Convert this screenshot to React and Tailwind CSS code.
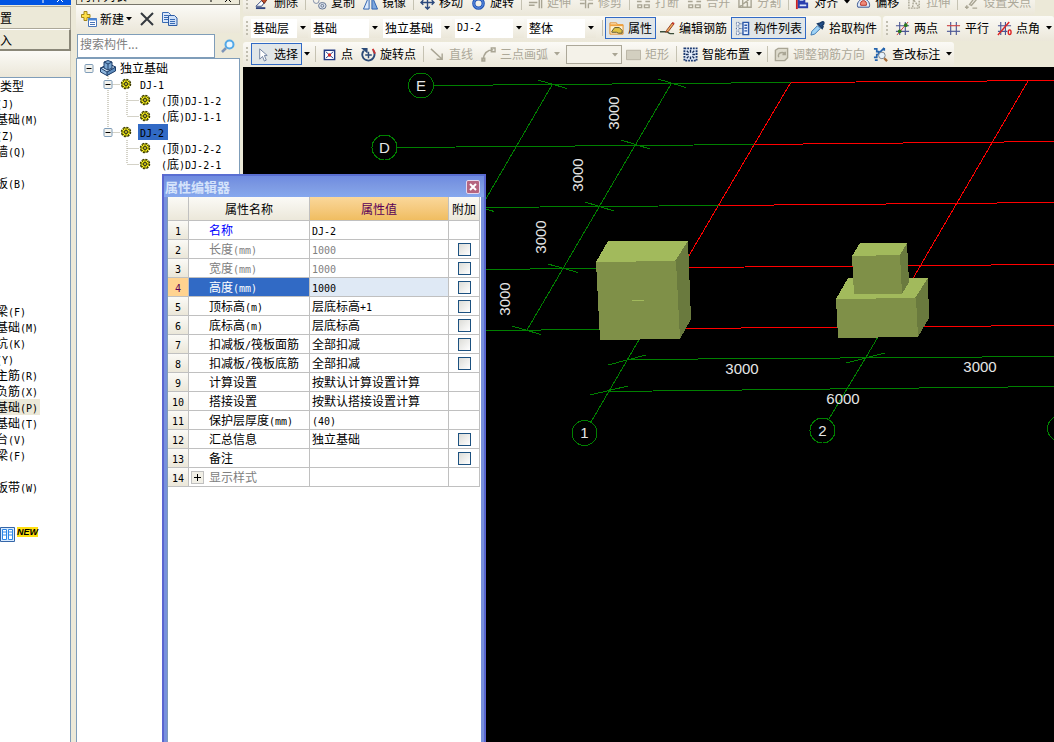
import React from "react";

const LATIN = "font-['DejaVu_Sans_Mono',monospace] text-[10px] leading-none";

/* Sets Latin runs half as wide as the CJK characters beside them. */
function T({ children }) {
  return String(children)
    .split(/([\x21-\x7e]+)/)
    .filter(Boolean)
    .map((part, i) =>
      /^[\x21-\x7e]/.test(part) ? (
        <span key={i} className={LATIN}>{part}</span>
      ) : (
        part
      )
    );
}

const G = "#a9a594";

const ICONS = {
  erase: (<><path d="M1 12h6l3-4-3-2z" fill="#fff" stroke="#31457f" /><path d="M7 6l3 3 4-6-2-2z" fill="#c2502d" stroke="#6d2a17" /><path d="M1 14h10" stroke="#31457f" strokeWidth="2" /></>),
  copy: (<><circle cx="4.500" cy="6" r="3" fill="none" stroke="#7c8aa5" /><ellipse cx="11" cy="11.500" rx="4" ry="3.500" fill="#dfe5ee" stroke="#61728f" /><ellipse cx="11" cy="11.500" rx="1.500" ry="1.500" fill="none" stroke="#61728f" /></>),
  mirror: (<><path d="M6.500 1v14H.5z" fill="#dbe9fb" stroke="#2b5fae" /><path d="M9.500 1v14h6z" fill="#7ea8dd" stroke="#2b5fae" /></>),
  move: (<path d="M8 1v14M1 8h14M5.500 3.500L8 1l2.500 2.500M5.500 12.500L8 15l2.500-2.500M3.500 5.500L1 8l2.500 2.500M12.500 5.500L15 8l-2.500 2.500" fill="none" stroke="#2d4a7d" strokeWidth="1.500" />),
  rotate: (<><circle cx="8" cy="9" r="5" fill="none" stroke="#2456b8" strokeWidth="3.500" /><circle cx="8" cy="9" r="5" fill="none" stroke="#6d9ee8" /><path d="M7 1h5v4z" fill="#c03a2a" /></>),
  extend: (<path d="M1 4h7M1 8h9M1 11h6M12 2v12M14.500 2v12" fill="none" stroke={G} strokeWidth="1.500" />),
  trim: (<path d="M1 5h5M10 5h5M1 9h5M10 9h5M7 1v13M10 9v5" fill="none" stroke={G} strokeWidth="1.500" />),
  split: (<path d="M1 7h5M10 7h5M2 10.500h4v3H2zM9 10.500h5v3H9z" fill="none" stroke={G} strokeWidth="1.500" />),
  divide: (<path d="M1 4h13v9H1zM1 13L14 3M5 4v9M10 4v9" fill="none" stroke={G} strokeWidth="1.500" />),
  align: (<><path d="M2 1v14" stroke="#ce2222" strokeWidth="2" /><path d="M4 3h6v4H4zM4 9h9v4H4z" fill="#dbe5fb" stroke="#2a3eae" strokeWidth="2" /></>),
  offset: (<><path d="M2 13c-2-4 2-9 6-9s8 5 6 9z" fill="#dfe8f7" stroke="#31508e" /><path d="M5 11c-1-3 1-5 3-5s4 2 3 5z" fill="#ef8a7a" stroke="#b33225" /></>),
  stretch: (<path d="M2 2h11v12H2zM6 13l1-8 5 7" fill="none" stroke={G} strokeWidth="1.500" strokeDasharray="2 1" />),
  grip: (<path d="M1 13h4M3 11v4M6 10l6-8 2 2-6 7zM9 14h5" fill="none" stroke={G} strokeWidth="1.500" />),
  attr: (<><path d="M1 2h7l1 2h6v10H1z" fill="#fff3d2" stroke="#e08a28" /><path d="M1 4.500h14" stroke="#f0a240" strokeWidth="2" /><path d="M3 11l3-4h5l3 3v3h-4l-2-1H3z" fill="#e1c343" stroke="#58512b" /></>),
  rebar: (<><path d="M0 11.500h7c2 0 2 2 4 2h4" fill="none" stroke="#3a4d3a" strokeWidth="1.500" /><path d="M7 10l6-8 2 1-6 8-3 1z" fill="#f1b05a" stroke="#8e3a24" /><path d="M13 2l2 1" stroke="#c4372b" strokeWidth="2" /></>),
  list: (<><path d="M1.500 1.500h3v3h-3zM1.500 6.500h3v3h-3zM1.500 11.500h3v3h-3z" fill="#fff" stroke="#33538f" strokeDasharray="1 1" /><path d="M5 3h3M5 8h3M5 13h3" stroke="#33538f" strokeDasharray="1 1" /><path d="M8.500 1.500h6v13h-6z" fill="#eaf2ff" stroke="#2b57a8" strokeWidth="1.500" /><path d="M10 4.500h3M10 7.500h3M10 10.500h3" stroke="#2b57a8" strokeWidth="1.500" /></>),
  pick: (<><path d="M1 15l1-4 6-6 3 3-6 6z" fill="#9fd3f6" stroke="#3b76b0" /><path d="M8 3l5 5 1-2-1-1c3-2 2-5 0-4l-2 1z" fill="#24518d" stroke="#173965" strokeWidth="1.500" /></>),
  twoPt: (<><path d="M5 1v14M11 1v14M1 5h14M1 11h14" stroke="#4b5694" strokeWidth="1.200" /><path d="M2 15L14 1" stroke="#c33" /><circle cx="5" cy="11" r="2" fill="#2c7a1c" /><circle cx="11.500" cy="4.500" r="2" fill="#2c7a1c" /></>),
  parallel: (<><path d="M5 1v14M11 1v14" stroke="#4b5694" strokeWidth="1.200" /><path d="M1 5h14" stroke="#c44" strokeWidth="1.200" /><path d="M1 11h14" stroke="#4b5694" strokeWidth="1.200" /></>),
  ptAngle: (<><path d="M4 1v14M9 1v14M1 5h14M1 11h10" stroke="#4b5694" strokeWidth="1.200" /><path d="M1 15L13 1" stroke="#d22" strokeWidth="1.500" /><ellipse cx="13.500" cy="12" rx="1.500" ry="2.500" fill="none" stroke="#d22" strokeWidth="1.500" /></>),
  pointer: (<path d="M5 2v11l3-3 2 5 2-1-2-5h3z" fill="#fff" stroke="#6d7fa0" />),
  point: (<><path d="M2.500 3.500h11v10h-11z" fill="#fff" stroke="#223a85" strokeWidth="1.500" /><path d="M4 5l8 7M12 5l-8 7" stroke="#223a85" /><circle cx="8" cy="8.500" r="1.800" fill="#d32626" /></>),
  rotPt: (<><path d="M3 4C0 7 1 14 8 14.500c6-.5 8-7 5-11" fill="none" stroke="#2b4a78" strokeWidth="2" /><path d="M0 1h7v6z" fill="#2b4a78" /><path d="M8 5v7M4.500 8.500h7" stroke="#2b4a78" strokeWidth="1.500" /><path d="M12.500 2l2.500 5" stroke="#c33" strokeWidth="2" /></>),
  line: (<path d="M1 2l12 11M13 7v6H7" fill="none" stroke={G} strokeWidth="1.500" />),
  arc: (<path d="M2 14C3 7 7 3 13 3M1 12h3v3H1zM11 1h4v4h-4z" fill="none" stroke={G} strokeWidth="1.500" />),
  rect: (<path d="M.5 3.500h15v10H.5z" fill="#d3cfc0" stroke="#b7b3a3" />),
  smart: (<><path d="M1.500 1.500h13v13h-13z" fill="#e6effc" stroke="#1c3a72" strokeWidth="2" strokeDasharray="2 1" /><path d="M8 3v3M8 10v3M3 8h3M10 8h3M4 4l2 2M12 4l-2 2M4 12l2-2M12 12l-2-2" stroke="#142c58" strokeWidth="1.500" /></>),
  adjust: (<><path d="M1.500 3.500l3-2h10v10l-3 3h-10z" fill="#dedbcd" stroke={G} strokeWidth="1.500" /><path d="M5 11c-2-5 5-7 7-3M9 8h3V5" fill="none" stroke={G} strokeWidth="1.500" /></>),
  check: (<><path d="M1 2h3v3h2v3H4v3H1M2 14h3M7 6l5-5M12 1v3" fill="none" stroke="#2564ae" strokeWidth="1.800" /><circle cx="9.500" cy="9" r="3.500" fill="#e6f2fb" stroke="#77808a" /><path d="M12 12l3 3" stroke="#a86c36" strokeWidth="2.500" /></>),
};

function Icon({ name }) {
  return (
    <svg viewBox="0 0 16 16" className="size-[15px] shrink-0" aria-hidden="true">{ICONS[name]}</svg>
  );
}

function Tool({ icon, label, off, on }) {
  return (
    <button
      type="button"
      disabled={off}
      className={
        "flex h-[22px] shrink-0 items-center gap-1 pr-1 pl-1 " +
        (on ? "bg-[#e1e6e8] outline outline-1 -outline-offset-1 outline-[#316ac5] " : "") +
        (off ? "text-[#aca899]" : "text-black")
      }
    >
      <Icon name={icon} />
      {label}
    </button>
  );
}

function Drop({ off, label }) {
  return (
    <button type="button" disabled={off} aria-label={label} className="flex h-[22px] w-2.5 shrink-0 items-center justify-center">
      <svg viewBox="0 0 6 4" className="h-1 w-1.5" aria-hidden="true"><path d="M0 0h6L3 3.500z" fill={off ? G : "#000"} /></svg>
    </button>
  );
}

const Sep = () => (
  <span className="flex w-1.5 shrink-0 justify-center"><span className="h-4 w-px bg-[#c5c2b2]" /></span>
);

const Handle = () => (
  <svg viewBox="0 0 4 16" className="mx-0.5 h-4 w-1 shrink-0" aria-hidden="true">
    <path d="M1 1h2v2H1zM1 5h2v2H1zM1 9h2v2H1zM1 13h2v2H1z" fill="#c1beb0" />
  </svg>
);

function Bar({ children }) {
  return (
    <div className="flex h-[25px] shrink-0 items-center rounded-[3px] bg-linear-to-b from-[#fbfaf6] to-[#ebe7d9]">
      <Handle />
      {children}
    </div>
  );
}

function Combo({ value, narrow, latin, label }) {
  return (
    <span className={"relative mr-[3px] flex h-[19px] shrink-0 " + (narrow ? "w-[57px]" : "w-[69px]")}>
      <select
        aria-label={label}
        defaultValue={value}
        className={"w-full appearance-none bg-white pr-3 pl-0.5 outline-none " + (latin ? "font-['DejaVu_Sans_Mono',monospace] text-[10px]" : "text-[12px]")}
      >
        <option>{value}</option>
      </select>
      <span className="pointer-events-none absolute inset-y-0 right-0 flex w-[11px] items-center justify-center bg-linear-to-b from-[#fbfaf6] to-[#ebe7d9]">
        <svg viewBox="0 0 6 4" className="h-1 w-1.5" aria-hidden="true"><path d="M0 0h6L3 3.500z" /></svg>
      </span>
    </span>
  );
}

function Toolbars() {
  return (
    <div className="flex h-[67px] shrink-0 flex-col justify-end overflow-hidden bg-[#ece9d8]">
      <div className="flex h-[26px] shrink-0 items-center">
        <Bar>
          <Tool icon="erase" label="删除" /><Sep />
          <Tool icon="copy" label="复制" /><Tool icon="mirror" label="镜像" /><Sep />
          <Tool icon="move" label="移动" /><Tool icon="rotate" label="旋转" /><Sep />
          <Tool icon="extend" label="延伸" off /><Tool icon="trim" label="修剪" off /><Sep />
          <Tool icon="split" label="打断" off /><Tool icon="split" label="合并" off />
          <Tool icon="divide" label="分割" off /><Sep />
          <Tool icon="align" label="对齐" /><Drop label="对齐" />
          <Tool icon="offset" label="偏移" /><Tool icon="stretch" label="拉伸" off /><Sep />
          <Tool icon="grip" label="设置夹点" off />
        </Bar>
      </div>
      <div className="flex h-[26px] shrink-0 items-center gap-0.5">
        <Bar>
          <Combo label="楼层" value="基础层" narrow />
          <Combo label="构件大类" value="基础" />
          <Combo label="构件类型" value="独立基础" />
          <Combo label="构件" value="DJ-2" latin />
          <Combo label="范围" value="整体" />
          <Sep />
          <Tool icon="attr" label="属性" on />
          <Tool icon="rebar" label="编辑钢筋" />
          <Tool icon="list" label="构件列表" on />
          <Tool icon="pick" label="拾取构件" />
        </Bar>
        <Bar>
          <Tool icon="twoPt" label="两点" />
          <Tool icon="parallel" label="平行" />
          <Tool icon="ptAngle" label="点角" />
          <Drop label="点角" />
        </Bar>
      </div>
      <div className="flex h-[26px] shrink-0 items-center">
        <Bar>
          <Tool icon="pointer" label="选择" on /><Drop label="选择" /><Sep />
          <Tool icon="point" label="点" /><Tool icon="rotPt" label="旋转点" /><Sep />
          <Tool icon="line" label="直线" off /><Tool icon="arc" label="三点画弧" off /><Drop label="三点画弧" off />
          <span className="relative ml-1 flex h-[19px] w-14 shrink-0">
            <select disabled aria-label="半径" className="w-full appearance-none border border-[#aca899] bg-[#f4f2e9]" />
            <svg viewBox="0 0 6 4" className="pointer-events-none absolute top-2 right-1 h-1 w-1.5" aria-hidden="true"><path d="M0 0h6L3 3.500z" fill={G} /></svg>
          </span>
          <Tool icon="rect" label="矩形" off /><Sep />
          <Tool icon="smart" label="智能布置" /><Drop label="智能布置" /><Sep />
          <Tool icon="adjust" label="调整钢筋方向" off />
          <Tool icon="check" label="查改标注" /><Drop label="查改标注" />
        </Bar>
      </div>
    </div>
  );
}

const MODULES = [
  "(J)", "基础(M)", "(Z)", "墙(Q)", "", "板(B)", "", "", "", "", "", "", "", "梁(F)", "基础(M)", "坑(K)", "(Y)",
  "主筋(R)", "负筋(X)", "基础(P)", "基础(T)", "台(V)", "梁(F)", "", "板带(W)",
];

function ModuleBar() {
  return (
    <aside className="flex w-[71px] shrink-0 flex-col overflow-hidden whitespace-nowrap">
      <div className="flex h-[5px] shrink-0 items-start justify-end bg-[#0054e3] pr-1">
        <svg viewBox="0 0 28 5" className="h-[5px] w-7" aria-hidden="true"><path d="M4 0v3M18 2l2-2M24 2l-2-2" stroke="#fff" fill="none" /></svg>
      </div>
      <button type="button" className="mt-px h-[23px] shrink-0 border-t border-r border-b border-[#aca899] text-left">置</button>
      <button type="button" className="h-[22px] shrink-0 border-t border-r-2 border-b-2 border-[#8a8778] border-t-white text-left">入</button>
      <div className="h-[26px] shrink-0 border-r border-[#d6d2c2] bg-linear-to-b from-[#fbfaf6] to-[#ebe7d9]" />
      <div className="flex-1 border-t border-r border-[#7f9db9] bg-white">
        <div className="h-[17px] leading-4">类型</div>
        <ul className="-ml-1">
          {MODULES.map((m, i) => (
            <li key={i} className={"h-4 w-11 leading-4 " + (i === 19 ? "bg-[#ece9d8]" : "")}><T>{m}</T></li>
          ))}
        </ul>
        <div className="flex items-start gap-0.5 pt-8">
          <svg viewBox="0 0 15 15" className="size-[15px]" aria-hidden="true">
            <path d="M.5.5h14v14H.5z" fill="#d9ebff" stroke="#3566a8" />
            <path d="M2.500 2.500h4v10h-4zM8.500 2.500h4v10h-4z" fill="#fff" stroke="#2c86e8" />
            <path d="M3 5h3M3 8h3M9 5h3M9 8h3" stroke="#2c86e8" />
          </svg>
          <span className="flex h-2.5 items-center bg-[#ffdf10] font-['Liberation_Sans',sans-serif] text-[9px] leading-none font-bold italic">NEW</span>
        </div>
      </div>
    </aside>
  );
}

function Gear() {
  return (
    <svg viewBox="0 0 12 12" className="size-3 shrink-0" aria-hidden="true">
      <circle cx="6" cy="6" r="4.500" fill="#f7ef1a" stroke="#3a3a00" strokeWidth="1.500" strokeDasharray="2 1.530" />
      <path d="M6 1v3M6 8v3M1 6h3M8 6h3M2.500 2.500l2 2M7.500 7.500l2 2M9.500 2.500l-2 2M4.500 7.500l-2 2" stroke="#3a3a00" strokeWidth=".8" />
      <circle cx="6" cy="6" r="1.500" fill="#f7ef1a" stroke="#222" />
    </svg>
  );
}

const Minus = ({ x }) => (
  <>
    <rect x={x - 4 + 0.5} y="4.5" width="8" height="8" rx="1" fill="#f4f3ee" stroke="#7f9db9" />
    <path d={`M${x - 2} 8.500h5`} stroke="#000" />
  </>
);

const DOT = { stroke: "#a8a48f", strokeDasharray: "1 1", fill: "none" };

function TreeRow({ level, text, through, last, selected }) {
  return (
    <li className="flex h-4 items-center">
      {level === 1 && (
        <svg viewBox="0 0 42 16" className="h-4 w-[43px] shrink-0" aria-hidden="true">
          <path d={through ? "M30.500 0v16M35 8.500h7" : "M30.500 0v8M35 8.500h7"} {...DOT} />
          <Minus x={30} />
        </svg>
      )}
      {level === 2 && (
        <svg viewBox="0 0 61 16" className="h-4 w-[62px] shrink-0" aria-hidden="true">
          <path d={(through ? "M30.500 0v16" : "") + (last ? "M49.500 0v8" : "M49.500 0v16") + "M50 8.500h11"} {...DOT} />
        </svg>
      )}
      <Gear />
      <span className={level === 1 ? "ml-1.5 pr-1 pl-0.5 leading-4 " + (selected ? "bg-[#316ac5]" : "") : "ml-2.5 leading-4"}><T>{text}</T></span>
    </li>
  );
}

function PartList() {
  return (
    <section className="ml-[5px] flex w-[164px] shrink-0 flex-col whitespace-nowrap">
      <header className="flex h-[5px] shrink-0 items-end justify-between overflow-hidden border-x border-b border-[#77756a] pr-1 pl-0.5">
        <span className="leading-4">构件列表</span>
        <svg viewBox="0 0 28 5" className="h-[5px] w-7" aria-hidden="true"><path d="M4 0v3M18 3l4-4M24 3l-4-4" stroke="#000" fill="none" /></svg>
      </header>
      <div className="flex h-7 shrink-0 items-center bg-linear-to-b from-[#fbfaf6] to-[#ebe7d9] pl-[5px]">
        <button type="button" className="flex items-center gap-[3px]">
          <svg viewBox="0 0 16 16" className="size-4" aria-hidden="true">
            <path d="M3 .5h3v3h3v3H6v3H3v-3H.5v-3H3z" fill="#ffe14a" stroke="#a3861b" />
            <path d="M7.500 7.500h8v8h-8z" fill="#fff" stroke="#4a76b8" />
            <path d="M7 8.500h9" stroke="#4a86d8" strokeWidth="2" />
            <path d="M9 11.500h5M9 13.500h5" stroke="#4a76b8" />
          </svg>
          新建
        </button>
        <Drop label="新建" />
        <button type="button" aria-label="删除" className="ml-1.5">
          <svg viewBox="0 0 14 14" className="size-3.5" aria-hidden="true"><path d="M1 1l12 12M13 1L1 13" stroke="#34393f" strokeWidth="2" /></svg>
        </button>
        <button type="button" aria-label="复制" className="ml-2">
          <svg viewBox="0 0 16 14" className="h-3.5 w-4" aria-hidden="true">
            <path d="M.5.5h6l2 2v8h-8z" fill="#dbe8fb" stroke="#3a6cb4" />
            <path d="M6.500 3.500h6l2.500 2.500v7.500h-8.500z" fill="#cfe0f8" stroke="#2d5ca4" />
            <path d="M2 3.500h4M2 5.500h4M2 7.500h4M8 7.500h5M8 9.500h5M8 11.500h5" stroke="#3a6cb4" />
          </svg>
        </button>
      </div>
      <div className="flex h-[25px] shrink-0 items-center gap-1.5 pl-px">
        <input type="text" aria-label="搜索构件" placeholder="搜索构件..." className="h-6 w-[138px] min-w-0 rounded-none border border-[#7f9db9] bg-white pb-1 pl-0.5 text-[12px] outline-none placeholder:text-[#808080]" />
        <button type="button" aria-label="搜索">
          <svg viewBox="0 0 14 14" className="size-3.5" aria-hidden="true">
            <path d="M1 13l4-4" stroke="#7d95b8" strokeWidth="2.500" />
            <circle cx="8.500" cy="5.500" r="4" fill="#eaf7ff" stroke="#52a8e8" strokeWidth="2" />
          </svg>
        </button>
      </div>
      <ul className="flex-1 overflow-hidden border border-b-0 border-[#7f9db9] bg-white pt-px">
        <li className="flex h-4 items-center">
          <svg viewBox="0 0 22 16" className="h-4 w-[23px] shrink-0" aria-hidden="true"><Minus x={11} /></svg>
          <svg viewBox="0 0 16 16" className="size-4 shrink-0" aria-hidden="true">
            <path d="M.5 8l4-2 8 3v3L7 15.500.5 12z" fill="#8fb6dc" stroke="#1f3f6b" />
            <path d="M7 15.500v-3.500l8.500-5v4z" fill="#5f8cbc" stroke="#1f3f6b" />
            <path d="M.5 8L7 12l8.500-5-4-2z" fill="#cfe2f3" stroke="#1f3f6b" />
            <path d="M4 2l4-1.500L12 2v6l-4 2-4-2z" fill="#7aa6d2" stroke="#1f3f6b" />
            <path d="M4 2l4 2 4-2M8 4v6" fill="none" stroke="#1f3f6b" />
          </svg>
          <span className="ml-1 leading-4">独立基础</span>
        </li>
        <TreeRow level={1} text="DJ-1" through />
        <TreeRow level={2} text="(顶)DJ-1-2" through />
        <TreeRow level={2} text="(底)DJ-1-1" through last />
        <TreeRow level={1} text="DJ-2" selected />
        <TreeRow level={2} text="(顶)DJ-2-2" />
        <TreeRow level={2} text="(底)DJ-2-1" last />
      </ul>
    </section>
  );
}

const GREEN = [
  "M434 85.500L791 82.500", "M397 147.500L754 144.500", "M480 207.500L719 205.500", "M480 269.500L684 267.500", "M480 330.500L604 329.500",
  "M552 85L480 209", "M671 84L527 330", "M640 338L591 422", "M878 337L829 419",
  "M628 359.500L1054 356.500", "M609 391.500L1054 386.500",
  "M608 365L646 355", "M590 395L628 386", "M846 363L885 353",
  "M538 80L567 88.500", "M658 79L686 87.500", "M621 140L650 149", "M585 202L614 211", "M548 264L578 272.500", "M512 326L541 334.500", "M480 207L494 211.500",
];
const RED = [
  "M791 82.500L1054 80.500", "M754 144.500L1054 141.500", "M719 205.500L1054 202.500", "M684 267.500L1054 264.500", "M680 328.500L1054 325.500",
  "M791 82L684 264", "M1028 81L908 287",
];
const BUBBLES = [["E", 421, 85.5], ["D", 384.5, 147.5], ["1", 584.5, 433], ["2", 822.5, 430.5], ["", 1060, 428.5]];
const DIMS = [["3000", 742, 369], ["3000", 980, 367], ["6000", 843, 399]];
const SIDE_DIMS = [[614, 113], [578, 175], [541, 237], [505, 299]];

function Viewport() {
  return (
    <div className="min-h-0 flex-1 overflow-hidden bg-black">
      <svg viewBox="243 67 811 675" preserveAspectRatio="xMinYMin slice" className="size-full" role="img" aria-label="三维视图">
        <g shapeRendering="crispEdges" fill="none">
          <path d={RED.join("")} stroke="#f00" />
          <path d={GREEN.join("")} stroke="#008000" />
          {BUBBLES.map(([t, x, y]) => <circle key={x} cx={x} cy={y} r="12.5" stroke="#008000" />)}
        </g>
        <g shapeRendering="crispEdges">
          <path d="M608 241H688L676 262H596z" fill="#a2ba5c" />
          <path d="M688 241L691 319 680 339 675 261z" fill="#6a7a3e" />
          <path d="M596 262L676 261 680 339 600 340z" fill="#7f9048" />
          <path d="M632 300.500h12" stroke="#a2ba5c" />
          <path d="M848 278H928L916 299H836z" fill="#a2ba5c" />
          <path d="M928 278L929 318 918 337 915 298z" fill="#6a7a3e" />
          <path d="M836 299L916 298 918 337 838 338z" fill="#7f9048" />
          <path d="M860 243H907L900 256H852z" fill="#a2ba5c" />
          <path d="M907 243L909 282 902 294 900 255z" fill="#6a7a3e" />
          <path d="M852 256L900 255 902 294H854z" fill="#7f9048" />
        </g>
        <g fill="#e6e6e6" textAnchor="middle" className="font-['Liberation_Sans',Arial,sans-serif] text-[15px]">
          {BUBBLES.map(([t, x, y]) => <text key={x} x={x} y={y + 5}>{t}</text>)}
          {DIMS.map(([t, x, y]) => <text key={x} x={x} y={y + 5}>{t}</text>)}
          {SIDE_DIMS.map(([x, y]) => <text key={x} x={x} y={y + 5} transform={`rotate(-90 ${x} ${y})`}>3000</text>)}
        </g>
      </svg>
    </div>
  );
}

const ROWS = [
  ["名称", "DJ-2", false, "text-[#0000ff]"],
  ["长度(mm)", "1000", true, "text-[#808080]"],
  ["宽度(mm)", "1000", true, "text-[#808080]"],
  ["高度(mm)", "1000", true, "text-white"],
  ["顶标高(m)", "层底标高+1", true],
  ["底标高(m)", "层底标高", true],
  ["扣减板/筏板面筋", "全部扣减", true],
  ["扣减板/筏板底筋", "全部扣减", true],
  ["计算设置", "按默认计算设置计算", false],
  ["搭接设置", "按默认搭接设置计算", false],
  ["保护层厚度(mm)", "(40)", false],
  ["汇总信息", "独立基础", true],
  ["备注", "", true],
  ["显示样式", "", false, "text-[#808080]"],
];

const CELL = "h-[19px] border-r border-b border-[#c0c0c0] p-0 leading-4 ";
const HEAD = "h-6 border-r border-b border-[#c0c0c0] p-0 font-normal ";

function PropertyEditor() {
  return (
    <section className="absolute top-[174px] bottom-0 left-[162px] flex w-[324px] flex-col overflow-hidden border-x-2 border-[#5a66d0] bg-[#7890dd] whitespace-nowrap">
      <header className="flex h-[23px] shrink-0 items-center justify-between border-t-2 border-[#5a6fd2] bg-linear-to-b from-[#6f8be0] via-[#7d9ae3] to-[#86a8ee] pr-1 pl-px">
        <h2 className="text-[13px] font-bold text-[#d5e3fb]">属性编辑器</h2>
        <button type="button" aria-label="关闭" className="flex size-3.5 items-center justify-center rounded-[2px] border border-[#e4d9ee] bg-[#b5647f]">
          <svg viewBox="0 0 8 8" className="size-2" aria-hidden="true"><path d="M1 1l6 6M7 1L1 7" stroke="#fff" strokeWidth="2" /></svg>
        </button>
      </header>
      <div className="mx-[3px] flex-1 border-l border-[#7f9db9] bg-white">
        <table className="w-[312px] table-fixed border-separate border-spacing-0">
          <thead>
            <tr className="bg-linear-to-b from-[#fbfaf6] to-[#ebe7d9]">
              <th className={HEAD + "w-[21px]"} />
              <th className={HEAD + "w-[121px]"}>属性名称</th>
              <th className={HEAD + "w-[139px] bg-linear-to-b from-[#fad79a] to-[#f0bd60] text-[#5a0058]"}>属性值</th>
              <th className={HEAD + "w-[31px]"}>附加</th>
            </tr>
          </thead>
          <tbody>
            {ROWS.map(([name, value, check, color], i) => (
              <tr key={name}>
                <td className={CELL + "text-center " + (i === 3 ? "bg-[#ffd390] text-[#5a0058]" : "bg-linear-to-b from-[#fbfaf6] to-[#ebe7d9]")}>
                  <T>{i + 1}</T>
                </td>
                <td className={CELL + (color || "") + (i === 3 ? " bg-[#316ac5]" : "")}>
                  <span className="flex items-center">
                    <span className="flex w-5 shrink-0 justify-start pl-0.5">
                      {i === 13 && (
                        <button type="button" aria-label="展开" className="flex size-[13px] items-center justify-center border border-[#c0c0c0] bg-[#f1efe6]">
                          <svg viewBox="0 0 7 7" className="size-[7px]" aria-hidden="true"><path d="M0 3.500h7M3.500 0v7" stroke="#000" /></svg>
                        </button>
                      )}
                    </span>
                    <span><T>{name}</T></span>
                  </span>
                </td>
                <td className={CELL + "pl-0.5 " + (i === 3 ? "bg-[#dfe9f5]" : i === 1 || i === 2 ? "text-[#808080]" : "")}><T>{value}</T></td>
                <td className={CELL}>
                  {check && (
                    <input type="checkbox" aria-label={name + " 附加"} className="mx-auto block size-[13px] appearance-none border border-[#1c5180] bg-linear-to-br from-[#dcdcd7] to-white" />
                  )}
                </td>
              </tr>
            ))}
          </tbody>
        </table>
      </div>
    </section>
  );
}

export default function App() {
  return (
    <div className="relative flex h-screen overflow-hidden bg-[#ece9d8] font-['Noto_Sans_CJK_SC',sans-serif] text-[12px] leading-4 text-black">
      <ModuleBar />
      <PartList />
      <main className="ml-[3px] flex min-w-0 flex-1 flex-col whitespace-nowrap">
        <Toolbars />
        <Viewport />
      </main>
      <PropertyEditor />
    </div>
  );
}
